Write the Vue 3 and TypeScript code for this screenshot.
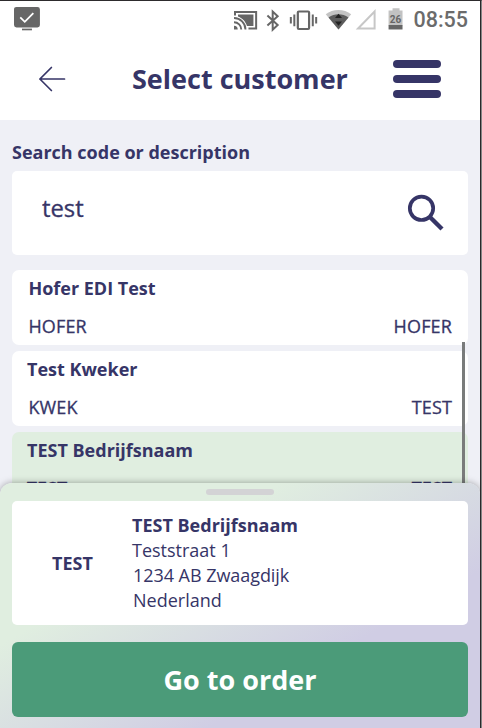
<script setup lang="ts">
import { ref } from 'vue'

interface Customer {
  name: string
  code: string
  search: string
  indent: number
}

const query = ref('test')
const selected = ref(2)
const customers: Customer[] = [
  { name: 'Hofer EDI Test', code: 'HOFER', search: 'HOFER', indent: 1 },
  { name: 'Test Kweker', code: 'KWEK', search: 'TEST', indent: 0 },
  { name: 'TEST Bedrijfsnaam', code: 'TEST', search: 'TEST', indent: 0 },
]
</script>

<template>
  <div class="screen">
    <div class="status">
      <svg class="monitor" width="26" height="24" viewBox="0 0 26 24">
        <rect width="26" height="20.5" rx="2.5" fill="#666" />
        <path d="M6.3 10.4l4.5 4.4 8.6-8.8" fill="none" stroke="#fff" stroke-width="1.8" />
        <path d="M8 22.5h10" stroke="#666" stroke-width="1.7" />
      </svg>
      <svg class="indicators" width="172" height="26" viewBox="0 0 172 26">
        <path d="M4 6.500h15.500v11.500H13C11.500 13.500 9 10.500 4 8.500z" fill="#666" />
        <g fill="none" stroke="#666">
          <path d="M1 7.500V3.900h21.200V20.400H14.500" stroke-width="2" />
          <path d="M0 14.200a7.300 7.300 0 0 1 7.300 7.300M0 10a11.500 11.500 0 0 1 11.500 11.500" stroke-width="1.900" />
          <path d="M33.500 7.500l10.300 9.500-5 4.700V3.500l5 4.700-10.300 9.300" stroke-width="2" />
          <rect x="64" y="3.500" width="11.300" height="17.500" rx="1" stroke-width="2.200" />
          <path d="M60.500 6.500v11.800M57 9v6.500M79 6.500v11.800M82.400 9v6.500" stroke-width="2" />
        </g>
        <path d="M0 17.800a3.700 3.700 0 0 1 3.700 3.700H0z" fill="#666" />
        <path d="M92 6.300C99 .6 110.500.6 117.500 6.300L104.800 21.400z" fill="#c3c3c3" />
        <path d="M94.800 9.600C101 5.200 108.500 5.200 114.800 9.600L104.800 21.400z" fill="#5c5c5c" />
        <path d="M101.300 10l3.500-4.200 3.500 4.200zM101.300 13.500l3.500 4.200 3.500-4.200z" fill="#222" />
        <path d="M124.400 20.500L141 3.500v17z" fill="none" stroke="#c7c7c7" stroke-width="2" />
        <path d="M155 2.500h4V.3h7v2.200h3v15h-14z" fill="#c2c2c2" />
        <path d="M155 17h14v4.500h-14z" fill="#666" />
        <text x="156.300" y="15" class="battery" textLength="11.500" lengthAdjust="spacingAndGlyphs">26</text>
      </svg>
      <span class="clock">08:55</span>
    </div>

    <header class="header">
      <svg width="28" height="26" viewBox="0 0 28 26" fill="none" stroke="#363567" stroke-width="1.700">
        <path d="M13.400 1.500L1.900 13l11.500 11.500M1.900 13H26.500" stroke-linejoin="round" stroke-linecap="round" />
      </svg>
      <h1>Select customer</h1>
      <div class="burger"><i></i><i></i><i></i></div>
    </header>

    <main class="content">
      <label class="label" for="query">Search code or description</label>
      <div class="search">
        <input id="query" v-model="query" type="text" />
        <svg width="38" height="38" viewBox="0 0 38 38" fill="none" stroke="#363567">
          <circle cx="14.500" cy="15.300" r="11.700" stroke-width="3.700" />
          <path d="M23.400 24.500L35 36" stroke-width="4.400" />
        </svg>
      </div>

      <div class="list">
        <div
          v-for="(customer, index) in customers"
          :key="customer.name"
          class="row"
          :class="{ active: index === selected, shifted: customer.indent === 1 }"
          @click="selected = index"
        >
          <strong>{{ customer.name }}</strong>
          <div class="codes">
            <span :class="{ tee: customer.code === 'TEST' }">{{ customer.code }}</span>
            <span>{{ customer.search }}</span>
          </div>
        </div>
      </div>
    </main>
    <div class="scrollbar"></div>

    <section class="sheet">
      <div class="handle"></div>
      <div class="card">
        <strong class="code">TEST</strong>
        <div class="address">
          <strong>TEST Bedrijfsnaam</strong>
          <span class="street">Teststraat 1</span>
          <span class="city">1234 AB Zwaagdijk</span>
          <span class="country">Nederland</span>
        </div>
      </div>
      <button class="order">Go to order</button>
    </section>
  </div>
</template>

<style>
body {
  background: #fff;
}
</style>

<style scoped>
.screen {
  position: relative;
  box-sizing: border-box;
  width: 482px;
  height: 728px;
  overflow: hidden;
  display: flex;
  flex-direction: column;
  border-top: 1px solid #2d2b2d;
  border-right: 1px solid #858585;
  box-shadow: inset -1px 0 #29292b;
  padding-right: 1px;
  background: #fff;
  color: #363567;
  font-family: 'Open Sans', 'Noto Sans', sans-serif;
}
.status {
  flex: none;
  height: 39px;
  box-sizing: border-box;
  display: flex;
  align-items: flex-start;
  padding: 6px 12px 0 14px;
}
.indicators {
  margin: 1px 0 0 194px;
}
.battery {
  font: 700 11.500px Roboto, sans-serif;
  fill: #666;
}
.clock {
  margin-left: 8px;
  font: 500 21.500px/26px Roboto, sans-serif;
  color: #6b6b6b;
}
.header {
  flex: none;
  height: 80px;
  box-sizing: border-box;
  display: flex;
  align-items: center;
  padding: 0 39px 2px 38px;
}
h1 {
  margin: 0 0 0 66px;
  font-size: 27px;
  line-height: 38px;
  font-weight: 700;
  white-space: nowrap;
  width: 261px;
}
.burger {
  display: flex;
  flex-direction: column;
  gap: 6.400px;
}
.burger i {
  width: 48px;
  height: 8.300px;
  border-radius: 5px;
  background: #363567;
}
.content {
  flex: none;
  height: 608px;
  box-sizing: border-box;
  padding: 20px 12px 0;
  background: #eff0f6;
}
.label {
  display: block;
  font-size: 18px;
  line-height: 24px;
  font-weight: 700;
}
.search {
  display: flex;
  align-items: flex-start;
  justify-content: space-between;
  height: 84px;
  box-sizing: border-box;
  margin-top: 7px;
  padding: 22px 23px 0 30px;
  border-radius: 5px;
  background: #fff;
}
.search input {
  width: 250px;
  height: 32px;
  margin-top: -1px;
  padding: 0;
  border: 0;
  outline: 0;
  background: none;
  color: inherit;
  font: 400 23.800px/32px 'Open Sans', sans-serif;
  -webkit-text-stroke: 0.300px #363567;
}
.list {
  display: flex;
  flex-direction: column;
  gap: 6px;
  margin-top: 15px;
}
.row {
  height: 75px;
  box-sizing: border-box;
  padding: 6px 16px 0 15px;
  border-radius: 7px;
  background: #fff;
  font-size: 18px;
  line-height: 25px;
}
.row.active {
  background: #e0eee0;
}
.row strong {
  display: block;
}
.row.shifted strong {
  padding-left: 1.400px;
}
.codes {
  display: flex;
  justify-content: space-between;
  margin-top: 13px;
  padding-left: 1.400px;
  letter-spacing: 0.150px;
  -webkit-text-stroke: 0.300px #363567;
}
.tee {
  margin-left: -1.400px;
}
.scrollbar {
  position: absolute;
  left: 462px;
  top: 341px;
  width: 3px;
  height: 150px;
  background: #797b7b;
}
.sheet {
  position: absolute;
  left: 0;
  bottom: 0;
  width: 480px;
  height: 245px;
  box-sizing: border-box;
  padding: 6px 12px 0;
  border-radius: 12px 12px 0 0;
  background: linear-gradient(150deg, #e0eee0 31%, #d0cde4 70%);
  box-shadow: 0 0 7px rgba(0, 0, 0, 0.35);
  clip-path: inset(-12px 0 0 0);
}
.handle {
  width: 68px;
  height: 6px;
  margin: 0 auto;
  border-radius: 3px;
  background: #d3d3d5;
}
.card {
  height: 124px;
  box-sizing: border-box;
  display: flex;
  align-items: center;
  margin-top: 6px;
  border-radius: 5px;
  background: #fff;
  font-size: 18px;
  line-height: 25px;
}
.code {
  width: 120px;
  text-align: center;
  text-indent: 1px;
}
.address {
  display: flex;
  flex-direction: column;
}
.address span {
  font-weight: 400;
}
.city,
.country {
  padding-left: 1px;
}
.city {
  letter-spacing: -0.050px;
}
.order {
  display: block;
  width: 456px;
  height: 75px;
  margin-top: 17px;
  padding: 1px 0 0;
  border: 0;
  border-radius: 6px;
  background: #4b9b79;
  color: #fff;
  font: 700 27px/38px 'Open Sans', sans-serif;
}
</style>
